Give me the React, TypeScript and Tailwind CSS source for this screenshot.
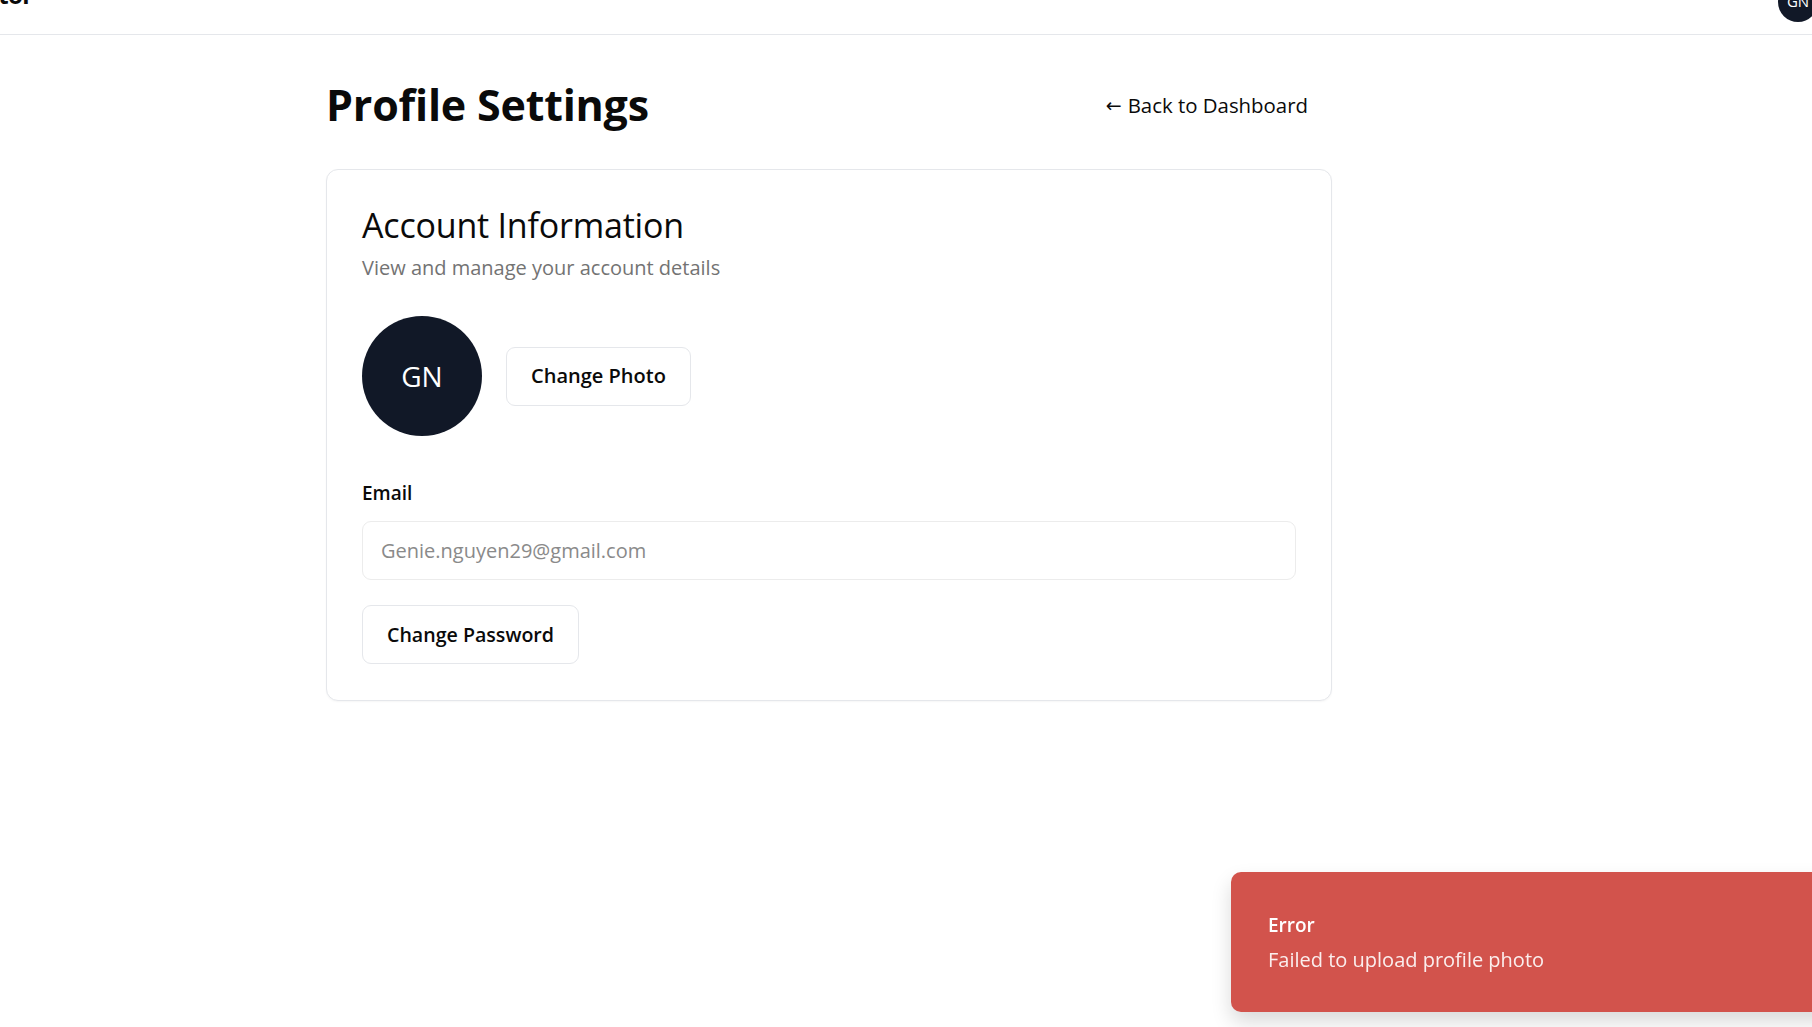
import React from "react";

export default function App() {
  return (
    <div className="min-h-[1027px] w-full bg-white font-['Open_Sans','Noto_Sans',sans-serif] text-[#0a0a0a] overflow-hidden">
      {/* Header (scrolled partly out of view) */}
      <header className="-mt-[31px] flex h-[66px] items-center justify-between border-b border-[#e5e7eb]">
        <div className="-ml-[36px] mb-[14px] text-[24px] font-bold leading-[30px] tracking-tight text-[#0a0a0a]">Editor</div>
        <div className="-mr-[6px] flex h-[40px] w-[40px] items-center justify-center rounded-full bg-[#111827] text-[15px] text-white">
          GN
        </div>
      </header>

      <main className="ml-[326px] w-[1006px]">
        <div className="mt-[45px] flex items-center justify-between">
          <h1 className="text-[43px] font-bold leading-[50px] tracking-[-0.2px]">Profile Settings</h1>
          <a className="mr-[24px] flex items-center gap-[6px] text-[20.4px] leading-[30px] text-[#0a0a0a]">
            <span className="font-['DejaVu_Sans',sans-serif] text-[19px] leading-[30px]">←</span>
            <span>Back to Dashboard</span>
          </a>
        </div>

        <section className="mt-[39px] rounded-[12px] border border-[#e5e7eb] bg-white px-[35px] pb-[36px] pt-[33px] shadow-[0_1px_2px_rgba(0,0,0,0.04)]">
          <h2 className="text-[34px] font-normal leading-[45px] tracking-[-0.2px]">Account Information</h2>
          <p className="mt-[5px] text-[20px] leading-[30px] text-[#737373]">View and manage your account details</p>

          <div className="mt-[33px] flex items-center gap-[24px]">
            <div className="flex h-[120px] w-[120px] items-center justify-center rounded-full bg-[#111827] text-[28px] text-white">
              GN
            </div>
            <button className="flex h-[59px] w-[185px] items-center justify-center rounded-[9px] border border-[#e5e7eb] bg-white text-[20px] font-semibold text-[#0a0a0a]">
              Change Photo
            </button>
          </div>

          <div className="mt-[42px] text-[19px] font-semibold leading-[30px]">Email</div>
          <div className="mt-[13px] flex h-[59px] w-[934px] items-center rounded-[9px] border border-[#ececec] px-[18px] text-[20px] text-[#8a8a8a]">
            Genie.nguyen29@gmail.com
          </div>

          <button className="mt-[25px] flex h-[59px] w-[217px] items-center justify-center rounded-[9px] border border-[#e5e7eb] bg-white text-[19.6px] font-semibold text-[#0a0a0a]">
            Change Password
          </button>
        </section>
      </main>

      {/* Toast */}
      <div className="fixed left-[1231px] top-[872px] h-[140px] w-[620px] rounded-[10px] bg-[#d2534c] pl-[37px] pt-[38px] shadow-[0_10px_20px_rgba(0,0,0,0.15)]">
        <div className="text-[19px] font-semibold leading-[30px] text-white">Error</div>
        <div className="mt-[5px] text-[20px] leading-[30px] text-white/90">Failed to upload profile photo</div>
      </div>
    </div>
  );
}
